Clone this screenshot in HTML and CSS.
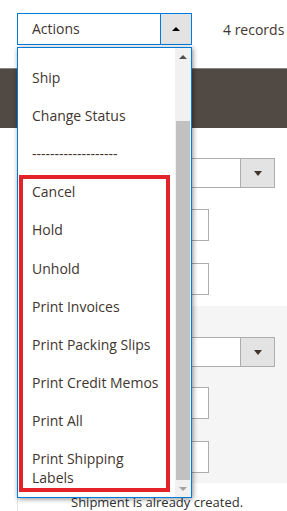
FILE: index.html
```html
<!DOCTYPE html>
<html lang="en">
<head>
  <meta charset="UTF-8">
  <title>Orders - Actions</title>
  <link rel="stylesheet" href="styles.css">
</head>
<body>
  <div class="page">
    <div class="toolbar">
      <div class="action-select">
        <span class="action-label">Actions</span>
        <span class="action-toggle"><i class="tri-up"></i></span>
      </div>
      <span class="records">4 records</span>
    </div>

    <div class="grid-head"></div>

    <div class="filters">
      <div class="fake-select"><span class="fake-arrow"><i class="tri-down"></i></span></div>
      <div class="fake-input"></div>
      <div class="fake-input"></div>
    </div>

    <div class="panel">
      <div class="fake-select"><span class="fake-arrow"><i class="tri-down"></i></span></div>
      <div class="fake-input"></div>
      <div class="fake-input"></div>
    </div>

    <div class="cell">Shipment is already created.</div>

    <!-- open actions menu -->
    <div class="menu">
      <ul class="menu-list">
        <li>Ship</li>
        <li>Change Status</li>
        <li>-------------------</li>
        <li class="menu-group">
          <ul>
            <li>Cancel</li>
            <li>Hold</li>
            <li>Unhold</li>
            <li>Print Invoices</li>
            <li>Print Packing Slips</li>
            <li>Print Credit Memos</li>
            <li>Print All</li>
            <li>Print Shipping Labels</li>
          </ul>
        </li>
      </ul>
      <div class="scrollbar">
        <div class="sb-btn"><i class="sb-up"></i></div>
        <div class="sb-track"><div class="sb-thumb"></div></div>
        <div class="sb-btn"><i class="sb-down"></i></div>
      </div>
    </div>
  </div>
</body>
</html>
```

FILE: styles.css
```css
html, body { margin: 0; overflow: hidden; }
body {
  font-family: "Open Sans", "Liberation Sans", sans-serif;
  font-size: 14px;
  color: #41362f;
  background: #fff;
}
.page { position: relative; width: 287px; height: 511px; overflow: hidden; }

.toolbar { display: flex; align-items: center; padding: 13px 0 0 17px; }
.action-select {
  display: flex;
  box-sizing: border-box;
  width: 175px;
  height: 32px;
  border: 1px solid #007bdb;
  flex-shrink: 0;
}
.action-label { flex: 1; padding-left: 14px; line-height: 30px; }
.action-toggle {
  width: 30px;
  border-left: 1px solid #007bdb;
  background: #e3e3e3;
  display: flex;
  align-items: center;
  justify-content: center;
}
.tri-up {
  width: 0; height: 0;
  border-left: 4px solid transparent;
  border-right: 4px solid transparent;
  border-bottom: 4px solid #000;
}
.records { margin-left: 31px; white-space: nowrap; }

.grid-head {
  margin-top: 23px;
  height: 60px;
  box-sizing: border-box;
  background: #514943;
  border-top: 1px solid #8a837f;
}

.filters { padding-top: 30px; }
.fake-select {
  display: flex;
  justify-content: flex-end;
  box-sizing: border-box;
  margin-left: 100px;
  width: 175px;
  height: 30px;
  border: 1px solid #adadad;
  background: #fff;
}
.fake-arrow {
  width: 33px;
  border-left: 1px solid #adadad;
  background: #e3e3e3;
  display: flex;
  align-items: center;
  justify-content: center;
}
.tri-down {
  width: 0; height: 0;
  border-left: 4px solid transparent;
  border-right: 4px solid transparent;
  border-top: 5px solid #41362f;
}
.fake-input {
  box-sizing: border-box;
  margin: 21px 0 0 100px;
  width: 109px;
  height: 32px;
  border: 1px solid #adadad;
  background: #fff;
}
.fake-input + .fake-input { margin-top: 22px; }

.panel {
  margin-top: 11px;
  padding: 31px 0 10px;
  margin-left: 100px;
  background: #f5f5f5;
}
.panel .fake-select, .panel .fake-input { margin-left: 0; }
.panel .fake-input { margin-top: 20px; }
.panel .fake-input + .fake-input { margin-top: 22px; }

.cell {
  margin-left: 17px;
  border-left: 1px solid #e3e3e3;
  padding: 10px 0 20px 53px;
  font-size: 13px;
  line-height: 18px;
  color: #303030;
}

.menu {
  position: absolute;
  left: 17px;
  top: 47px;
  width: 175px;
  height: 451px;
  box-sizing: border-box;
  display: flex;
  border: 1px solid #007bdb;
  background: #fff;
  box-shadow: 1px 1px 5px rgba(0,0,0,0.45);
  overflow: hidden;
}
.menu ul { list-style: none; margin: 0; padding: 0; }
.menu-list { flex: 1; padding-top: 10.5px !important; }
.menu li { padding: 9.55px 14px; line-height: 19px; }
.menu li.menu-group { padding: 0; position: relative; }
.menu-group::after {
  content: "";
  position: absolute;
  left: 1px;
  top: 2px;
  width: 151px;
  height: 317px;
  box-sizing: border-box;
  border: 4px solid #e3222a;
}

.scrollbar { width: 16px; background: #f1f1f1; display: flex; flex-direction: column; }
.sb-btn { height: 17px; display: flex; align-items: center; justify-content: center; }
.sb-up {
  width: 0; height: 0;
  border-left: 4px solid transparent;
  border-right: 4px solid transparent;
  border-bottom: 4px solid #505050;
}
.sb-down {
  width: 0; height: 0;
  border-left: 4px solid transparent;
  border-right: 4px solid transparent;
  border-top: 4px solid #a3a3a3;
}
.sb-track { flex: 1; display: flex; flex-direction: column; padding-top: 56px; }
.sb-thumb { flex: 1; margin: 0 1px; background: #c1c1c1; }
```
